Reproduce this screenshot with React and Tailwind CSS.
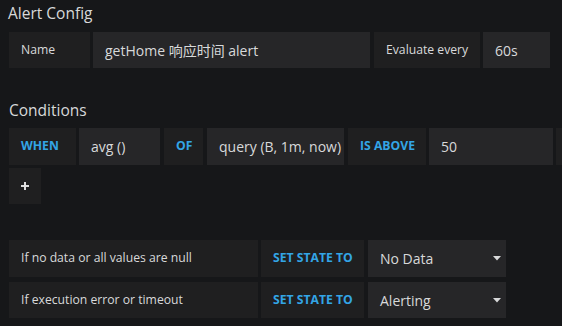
import React from "react";

const Label = ({ className = "", children }) => (
  <div className={`flex h-9 shrink-0 items-center whitespace-nowrap bg-[#1f1f20] px-3 text-[12.2px] text-[#d8d9da] ${className}`}>{children}</div>
);
const Input = ({ className = "", children }) => (
  <div className={`flex h-9 shrink-0 items-center whitespace-nowrap bg-[#262628] px-3 text-[14px] text-[#d8d9da] ${className}`}>{children}</div>
);
const Kw = ({ className = "", children }) => (
  <div className={`flex h-9 shrink-0 items-center whitespace-nowrap bg-[#1f1f20] px-3 text-[12.2px] font-bold text-[#33a5e6] ${className}`}>{children}</div>
);

const Caret = () => (
  <svg width="8" height="5" viewBox="0 0 8 5" className="ml-auto">
    <path d="M0 0 H8 L4 4.5 Z" fill="#d8d9da" />
  </svg>
);

export default function App() {
  return (
    <div className="h-[326px] w-[562px] overflow-hidden bg-[#161719] font-['Open_Sans','Noto_Sans_CJK_SC',sans-serif] text-[#d8d9da]">
      <div className="pl-[9px]">
        <h5 className="pt-[1px] text-[15.5px] leading-[24px] -ml-[1px]">Alert Config</h5>
        <div className="mt-[7px] flex">
          <Label className="w-[81px]">Name</Label>
          <Input className="ml-[3px] w-[277px]">getHome 响应时间 alert</Input>
          <Label className="ml-[4px] w-[106px]">Evaluate every</Label>
          <Input className="ml-[3px] w-[67px]">60s</Input>
        </div>

        <h5 className="mt-[30px] text-[15.5px] leading-[24px]">Conditions</h5>
        <div className="mt-[6px] flex">
          <Kw className="w-[67px] h-[37px]">WHEN</Kw>
          <Input className="ml-[3px] w-[81px] h-[37px] text-[12.2px]">avg ()</Input>
          <Kw className="ml-[4px] w-[39px] h-[37px]">OF</Kw>
          <Input className="ml-[4px] w-[137px] h-[37px] text-[12px]">query (B, 1m, now)</Input>
          <Kw className="ml-[4px] w-[78px] h-[37px]">IS ABOVE</Kw>
          <Input className="ml-[3px] w-[124px] h-[37px]">50</Input>
          <Label className="ml-[3px] w-[40px] h-[37px]"></Label>
        </div>
        <div className="mt-[3px] flex">
          <Label className="w-[32px] justify-center px-0">
            <svg width="10" height="10" viewBox="0 0 10 10">
              <rect x="3.8" y="0" width="2.4" height="10" fill="#e4e4e4" />
              <rect x="0" y="3.8" width="10" height="2.4" fill="#e4e4e4" />
            </svg>
          </Label>
        </div>

        <div className="mt-[36px] flex">
          <Label className="w-[249px] h-[37px]">If no data or all values are null</Label>
          <Kw className="ml-[3px] w-[103px] h-[37px]">SET STATE TO</Kw>
          <Input className="ml-[4px] w-[138px] h-[37px] pr-[5px]">No Data<Caret /></Input>
        </div>
        <div className="mt-[5px] flex">
          <Label className="w-[249px] h-[36px]">If execution error or timeout</Label>
          <Kw className="ml-[3px] w-[103px] h-[36px]">SET STATE TO</Kw>
          <Input className="ml-[4px] w-[138px] h-[36px] pr-[5px]">Alerting<Caret /></Input>
        </div>
      </div>
    </div>
  );
}
